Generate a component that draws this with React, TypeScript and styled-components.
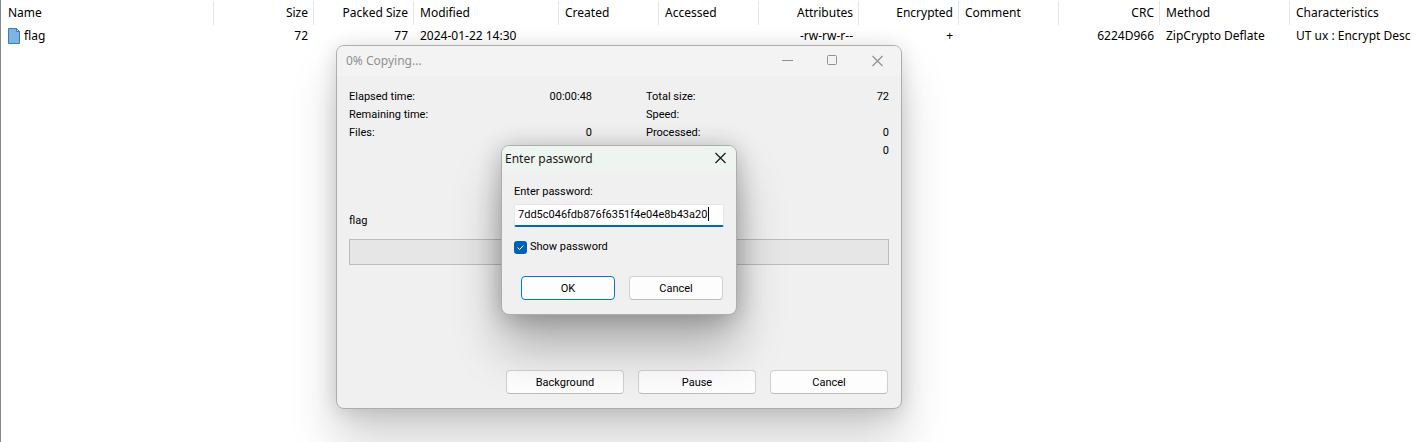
import React, { useState } from "react";
import styled, { createGlobalStyle } from "styled-components";

const listFont = `"Noto Sans", "Open Sans", sans-serif`;
const dialogFont = `Roboto, "Liberation Sans", sans-serif`;

const GlobalStyle = createGlobalStyle`
  * { box-sizing: border-box; }
  html, body { margin: 0; background: #fff; }
  body { overflow: hidden; }
  button, input { font: inherit; color: inherit; }
`;

const Desktop = styled.main`
  position: relative;
  min-height: 100vh;
  overflow: hidden;
  border-left: 1px solid #828790;
  font-family: ${listFont};
  font-size: 12px;
  line-height: 16px;
  color: #000;
`;

const FileTable = styled.table`
  width: 100%;
  table-layout: fixed;
  border-collapse: separate;
  border-spacing: 0;
`;

const HeadCell = styled.th<{ $right?: boolean }>`
  height: 25px;
  padding: 1px 6px 0;
  font-weight: 400;
  white-space: nowrap;
  text-align: ${(p) => (p.$right ? "right" : "left")};
  background: linear-gradient(#e5e5e5, #e5e5e5) right bottom / 1px 24px no-repeat;
  &:first-child { padding-left: 7px; }
  &:last-child { background: none; }
`;

const Cell = styled.td<{ $right?: boolean }>`
  height: 22px;
  padding: 0 6px;
  white-space: nowrap;
  text-align: ${(p) => (p.$right ? "right" : "left")};
  &:first-child { padding-left: 7px; }
  &:last-child { padding-right: 0; }
`;

const FileName = styled.span`
  display: flex;
  align-items: center;
  gap: 3px;
`;

const Window = styled.section`
  position: absolute;
  display: flex;
  flex-direction: column;
  border: 1px solid #adadad;
  border-radius: 8px;
  background: #f0f0f0;
  font-family: ${dialogFont};
  font-size: 11px;
  line-height: 18px;
`;

const CopyWindow = styled(Window)`
  left: 335px;
  top: 45px;
  width: 566px;
  height: 364px;
  box-shadow: 0 32px 48px rgba(0, 0, 0, 0.18), 0 2px 20px rgba(0, 0, 0, 0.15);
`;

const PasswordWindow = styled(Window)`
  left: 500px;
  top: 145px;
  width: 236px;
  height: 170px;
  box-shadow: 0 32px 48px rgba(0, 0, 0, 0.28), 0 2px 24px rgba(0, 0, 0, 0.24);
`;

const TitleBar = styled.header<{ $active?: boolean }>`
  display: flex;
  flex: none;
  align-items: center;
  justify-content: space-between;
  height: ${(p) => (p.$active ? 25 : 30)}px;
  padding: ${(p) => (p.$active ? "0 9px 0 3px" : "0 17px 0 9px")};
  border-radius: 7px 7px 0 0;
  background: ${(p) => (p.$active ? "#eef4f0" : "#f3f3f3")};
  color: ${(p) => (p.$active ? "#1a1a1a" : "#909090")};
`;

const Title = styled.h1`
  margin: 0;
  font-family: ${listFont};
  font-size: 12px;
  font-weight: 400;
`;

const Captions = styled.div`
  display: flex;
  gap: 32px;
`;

const CaptionButton = styled.button`
  display: flex;
  padding: 0;
  border: 0;
  background: none;
`;

const CopyBody = styled.div`
  display: flex;
  flex: 1;
  flex-direction: column;
  padding: 12px 12px 14px;
`;

const Stats = styled.div`
  display: grid;
  grid-template-columns: 1fr 1fr;
  column-gap: 54px;
`;

const StatList = styled.dl`
  margin: 0;
`;

const Stat = styled.div`
  display: flex;
  justify-content: space-between;
  height: 18px;
  dd { margin: 0; }
`;

const CurrentFile = styled.p`
  margin: 52px 0 9px;
`;

const Progress = styled.div`
  height: 26px;
  border: 1px solid #bcbcbc;
  background: #e6e6e6;
`;

const Actions = styled.div`
  display: flex;
  justify-content: flex-end;
  gap: 14px;
  margin-top: auto;
  padding-right: 1px;
`;

const PushButton = styled.button<{ $wide?: boolean; $primary?: boolean }>`
  width: ${(p) => (p.$wide ? 118 : 94)}px;
  height: 24px;
  padding: 2px 0 0;
  border: 1px solid ${(p) => (p.$primary ? "#0078d4" : "#d0d0d0")};
  border-bottom-color: ${(p) => (p.$primary ? "#0078d4" : "#bcbcbc")};
  border-radius: 4px;
  background: #fdfdfd;
  line-height: 18px;
`;

const PasswordForm = styled.form`
  display: flex;
  flex: 1;
  flex-direction: column;
  padding: 12px 12px 14px;
`;

const PasswordInput = styled.input`
  width: 100%;
  height: 23px;
  margin: 3px 0 11px;
  padding: 0 3px 2px;
  border: 1px solid #e5e5e5;
  border-bottom: 2px solid #0067c0;
  border-radius: 2px;
  outline: 0;
  background: linear-gradient(#000, #000) 193px 2px / 1px 14px no-repeat #fff;
  caret-color: transparent;
  line-height: 18px;
`;

const CheckLabel = styled.label`
  display: flex;
  align-items: center;
  gap: 3px;
`;

const CheckBox = styled.input`
  appearance: none;
  width: 13px;
  height: 13px;
  margin: 0;
  border-radius: 3px;
  background: #005fb8;
`;

const CheckHolder = styled.span`
  position: relative;
  display: flex;
  svg { position: absolute; inset: 0; pointer-events: none; }
`;

const columns = [
  { name: "Name", width: 213 },
  { name: "Size", width: 100, right: true, value: "72" },
  { name: "Packed Size", width: 100, right: true, value: "77" },
  { name: "Modified", width: 145, value: "2024-01-22 14:30" },
  { name: "Created", width: 100 },
  { name: "Accessed", width: 100 },
  { name: "Attributes", width: 100, right: true, value: "-rw-rw-r--" },
  { name: "Encrypted", width: 100, right: true, value: "+" },
  { name: "Comment", width: 100 },
  { name: "CRC", width: 101, right: true, value: "6224D966" },
  { name: "Method", width: 130, value: "ZipCrypto Deflate" },
  { name: "Characteristics", value: "UT ux : Encrypt Desc" },
];

const leftStats = [
  ["Elapsed time:", "00:00:48"],
  ["Remaining time:", ""],
  ["Files:", "0"],
];
const rightStats = [
  ["Total size:", "72"],
  ["Speed:", ""],
  ["Processed:", "0"],
  ["Compressed size:", "0"],
];

const FileIcon = () => (
  <svg width="13" height="17" viewBox="0 0 13 17" aria-hidden="true">
    <path d="M.5 .5h8l3 3v12h-11z" fill="#7ab5e6" stroke="#3b7db4" />
    <path d="M8.5 .5v3h3z" fill="#d5e9f8" stroke="#3b7db4" />
  </svg>
);

const CloseIcon = () => (
  <svg width="13" height="13" viewBox="0 0 13 13" stroke="currentColor" strokeWidth="1.2" aria-hidden="true">
    <path d="M1.5 1l10 10M11.5 1l-10 10" />
  </svg>
);

const StatColumn = ({ rows }: { rows: string[][] }) => (
  <StatList>
    {rows.map(([label, value]) => (
      <Stat key={label}>
        <dt>{label}</dt>
        <dd>{value}</dd>
      </Stat>
    ))}
  </StatList>
);

export default function App() {
  const [password, setPassword] = useState("7dd5c046fdb876f6351f4e04e8b43a20");
  const [shown, setShown] = useState(true);

  return (
    <>
      <GlobalStyle />
      <Desktop>
        <FileTable>
          <colgroup>
            {columns.map((c) => (
              <col key={c.name} width={c.width} />
            ))}
          </colgroup>
          <thead>
            <tr>
              {columns.map((c) => (
                <HeadCell key={c.name} $right={c.right}>{c.name}</HeadCell>
              ))}
            </tr>
          </thead>
          <tbody>
            <tr>
              {columns.map((c, i) => (
                <Cell key={c.name} $right={c.right}>
                  {i === 0 ? <FileName><FileIcon />flag</FileName> : c.value}
                </Cell>
              ))}
            </tr>
          </tbody>
        </FileTable>

        <CopyWindow aria-label="Copying">
          <TitleBar>
            <Title>0% Copying...</Title>
            <Captions>
              <CaptionButton aria-label="Minimize">
                <svg width="13" height="13" viewBox="0 0 13 13" stroke="currentColor"><path d="M1 5.5h11" /></svg>
              </CaptionButton>
              <CaptionButton aria-label="Maximize">
                <svg width="13" height="13" viewBox="0 0 13 13" stroke="currentColor" fill="none"><rect x="1.5" y=".5" width="9" height="9" rx="1" /></svg>
              </CaptionButton>
              <CaptionButton aria-label="Close"><CloseIcon /></CaptionButton>
            </Captions>
          </TitleBar>
          <CopyBody>
            <Stats>
              <StatColumn rows={leftStats} />
              <StatColumn rows={rightStats} />
            </Stats>
            <CurrentFile>flag</CurrentFile>
            <Progress role="progressbar" aria-valuenow={0} />
            <Actions>
              <PushButton $wide>Background</PushButton>
              <PushButton $wide>Pause</PushButton>
              <PushButton $wide>Cancel</PushButton>
            </Actions>
          </CopyBody>
        </CopyWindow>

        <PasswordWindow role="dialog" aria-label="Enter password">
          <TitleBar $active>
            <Title>Enter password</Title>
            <CaptionButton aria-label="Close"><CloseIcon /></CaptionButton>
          </TitleBar>
          <PasswordForm onSubmit={(e) => e.preventDefault()}>
            <label htmlFor="password">Enter password:</label>
            <PasswordInput
              id="password"
              autoFocus
              type={shown ? "text" : "password"}
              value={password}
              onChange={(e) => setPassword(e.target.value)}
              onFocus={(e) => e.target.setSelectionRange(password.length, password.length)}
            />
            <CheckLabel>
              <CheckHolder>
                <CheckBox type="checkbox" checked={shown} onChange={(e) => setShown(e.target.checked)} />
                <svg width="13" height="13" viewBox="0 0 13 13" fill="none" stroke="#fff"><path d="M3.5 6.5l2 2 4-4" /></svg>
              </CheckHolder>
              Show password
            </CheckLabel>
            <Actions>
              <PushButton $primary type="submit">OK</PushButton>
              <PushButton type="button">Cancel</PushButton>
            </Actions>
          </PasswordForm>
        </PasswordWindow>
      </Desktop>
    </>
  );
}
